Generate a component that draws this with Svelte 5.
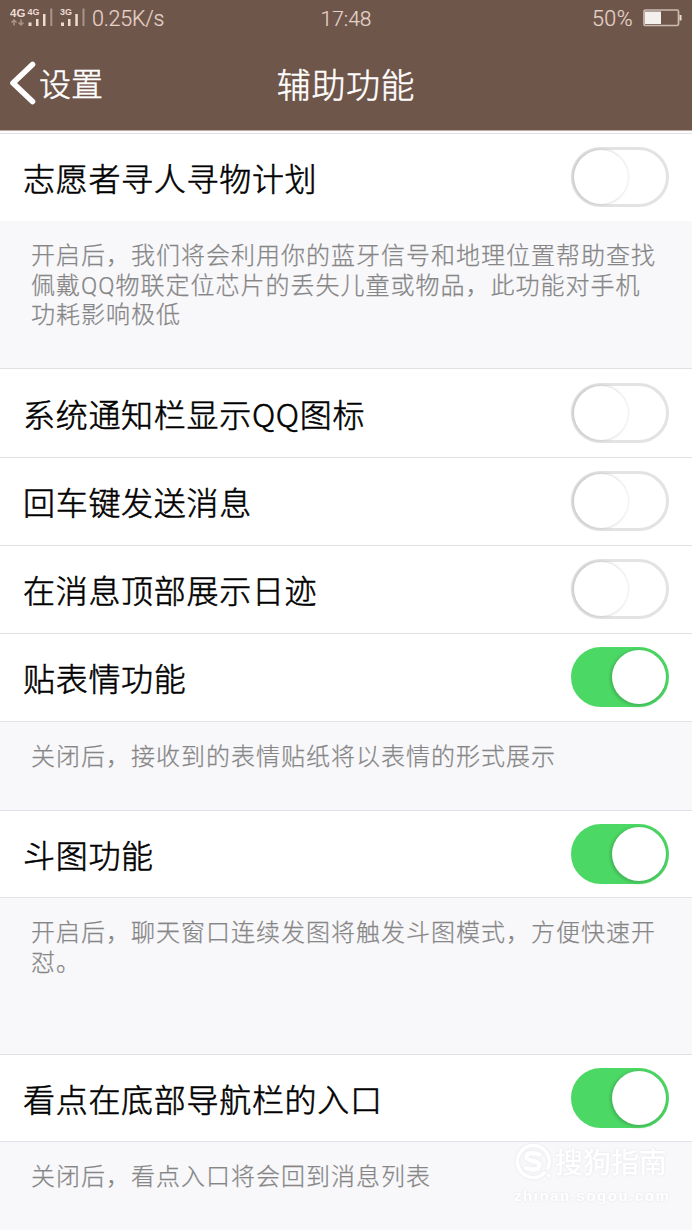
<script>
  const sections = [
    { rows: [{ label: '志愿者寻人寻物计划', on: false, h: 88 }], note: ['开启后，我们将会利用你的蓝牙信号和地理位置帮助查找', '佩戴QQ物联定位芯片的丢失儿童或物品，此功能对手机', '功耗影响极低'], h: 147 },
    { rows: [
      { label: '系统通知栏显示QQ图标', on: false, h: 89 },
      { label: '回车键发送消息', on: false, h: 88 },
      { label: '在消息顶部展示日迹', on: false, h: 88 },
      { label: '贴表情功能', on: true, h: 88 }
    ], note: ['关闭后，接收到的表情贴纸将以表情的形式展示'], h: 89 },
    { rows: [{ label: '斗图功能', on: true, h: 87 }], note: ['开启后，聊天窗口连续发图将触发斗图模式，方便快速开', '怼。'], h: 157 },
    { rows: [{ label: '看点在底部导航栏的入口', on: true, h: 87 }], note: ['关闭后，看点入口将会回到消息列表'], h: 89 }
  ];
</script>

<main class="screen">
  <header>
    <div class="status">
      <div class="left">
        <svg width="78" height="36" viewBox="9 0 78 36">
          <g fill="#ecdcd4" font-family="Liberation Sans, sans-serif" font-weight="700">
            <text x="10" y="17.200" font-size="11.5">4G</text>
            <text x="27.500" y="15" font-size="9">4G</text>
            <text x="60" y="15" font-size="9">3G</text>
          </g>
          <g fill="none" stroke="#aa9489" stroke-width="1.5">
            <path d="M14 25.500v-5.500M11.500 22.500L14 20l2.500 2.500M21 19.500V25M18.500 22.500L21 25l2.500-2.500" />
          </g>
          <path fill="#ecdcd4" d="M28.500 22.500h3v3.500h-3zM36 19h2.500v7h-2.500zM43 14h2.500v12h-2.500zM61 22.500h3v3.500h-3zM68 19h2.500v7h-2.500zM75.300 14h2.500v12h-2.500z" />
          <path fill="#aa9489" d="M50.300 8.500h2v17.500h-2zM82.500 8.500h2v17.500h-2z" />
        </svg>
        <span class="speed">0.25K/s</span>
      </div>
      <span class="clock">17:48</span>
      <div class="power">
        <span>50%</span>
        <svg width="40" height="18" viewBox="0 0 40 18">
          <rect x="2" y="1" width="34.500" height="15.500" rx="1.500" fill="none" stroke="#cbbbb2" stroke-width="1.700" />
          <path d="M3 2.500h16v12.500H3z" fill="#f4f0ee" />
          <path d="M37.500 6h2v5.500h-2z" fill="#ecdcd4" />
        </svg>
      </div>
    </div>
    <nav>
      <a class="back" href="#settings">
        <svg width="30" height="48" viewBox="0 0 30 48"><path d="M24.500 5.500L5 24l19.500 18.500" fill="none" stroke="#fff" stroke-width="5.600" stroke-linecap="round" stroke-linejoin="round" /></svg>
        <span>设置</span>
      </a>
      <h1>辅助功能</h1>
      <span></span>
    </nav>
  </header>
  <div class="gap"></div>
  {#each sections as s}
    <section>
      {#each s.rows as r}
        <div class="row" style:height="{r.h}px">
          <span class="label">{r.label}</span>
          <button class="toggle" class:on={r.on} role="switch" aria-checked={r.on} aria-label={r.label}><i></i></button>
        </div>
      {/each}
      <div class="note" style:height="{s.h}px">
        {#each s.note as line}<p>{line}</p>{/each}
      </div>
    </section>
  {/each}
  <div class="mark">
    <svg width="40" height="40" viewBox="0 0 40 40">
      <g fill="none" stroke="#fff" stroke-linecap="round">
        <path d="M30.500 31A16 16 0 1 1 34 26" stroke-width="3.500" />
        <path d="M25.500 12.500C19 10 12 11 12.500 15.500c.5 4 13 3 13 7.500 0 5-7 5.500-13.500 3" stroke-width="4.500" />
        <path d="M34 33l1 1" stroke-width="3" />
      </g>
    </svg>
    <span class="brand">搜狗指南</span>
    <span class="site">zhinan.sogou.com</span>
  </div>
</main>

<style>
  :global(body) { margin: 0; background: #f8f8fb; }
  .screen {
    position: relative;
    width: 692px;
    height: 1230px;
    overflow: hidden;
    background: #f8f8fb;
    font-family: "Noto Sans CJK SC", sans-serif;
    color: #080808;
  }
  header { height: 130px; background: #6f564a; color: #fff; border-bottom: 1px solid #b9aaa3; }
  .status {
    display: grid;
    grid-template-columns: 1fr auto 1fr;
    height: 36px;
    padding: 0 10px 0 9px;
    align-items: center;
    font-family: Roboto, sans-serif;
    font-size: 21.5px;
    font-weight: 300;
    color: #e4d3ca;
    -webkit-text-stroke: 0.2px #e4d3ca;
  }
  .left svg { -webkit-text-stroke: 0; }
  .left { display: flex; align-items: center; gap: 5px; }
  .speed { letter-spacing: -0.25px; }
  .clock { font-size: 21px; padding: 2px 0 0 1px; }
  .power { display: flex; justify-content: flex-end; align-items: center; gap: 9px; letter-spacing: 0.4px; }
  nav {
    display: grid;
    grid-template-columns: 1fr auto 1fr;
    align-items: center;
    height: 94px;
  }
  .back { display: flex; align-items: center; padding: 0 0 0 8px; color: #fff; text-decoration: none; font-size: 32px; line-height: 48px; font-weight: 300; -webkit-text-stroke: 0.5px #fff; }
  .back svg { margin-right: 1px; }
  .back span { margin-top: -3px; }
  h1 { margin: 1px 0 0; font-size: 34px; line-height: 50px; font-weight: 300; letter-spacing: 0.6px; -webkit-text-stroke: 0.5px #fff; }
  .gap { height: 2px; background: #fdfdfd; }
  .row {
    box-sizing: border-box;
    display: flex;
    align-items: center;
    justify-content: space-between;
    padding: 0 23px;
    background: #fff;
    border-top: 1px solid #e0e1e4;
  }
  .label { font-size: 32px; line-height: 48px; letter-spacing: 0.7px; margin-top: -1px; font-weight: 300; -webkit-text-stroke: 0.55px #000; color: #000; }
  .toggle {
    box-sizing: border-box;
    display: flex;
    align-items: center;
    width: 98px;
    height: 60px;
    margin: 0 0 1px;
    padding: 0;
    border: 3px solid #e3e3e3;
    border-radius: 30px;
    background: #fff;
  }
  .toggle i { width: 54px; height: 54px; border-radius: 50%; background: #fff; box-shadow: -1px 0 3px 0.5px #c6c6c6; }
  .toggle.on { justify-content: flex-end; border-color: #4cd864; background: #4cd864; }
  .toggle.on i { box-shadow: -1px 1px 3px 1px #42b557; }
  .note { box-sizing: border-box; padding: 20px 31px 0; border-top: 1px solid #e3e3e7; background: #f8f8fb; }
  section:first-of-type .note { border-top-color: #f8f8fb; }
  section:not(:first-of-type) .note { padding-top: 21px; }
  p { margin: 0; color: #868686; font-family: Roboto, "Noto Sans CJK SC", sans-serif; font-size: 24px; font-weight: 300; line-height: 29.5px; letter-spacing: 1px; white-space: nowrap; -webkit-text-stroke: 0.25px #868686; }
  .mark {
    position: absolute;
    left: 514px;
    top: 1142px;
    display: grid;
    grid-template-columns: 41px auto;
    color: #fff;
    filter: drop-shadow(0 0 1px #e2e2e6);
  }
  .brand { font-size: 28px; line-height: 40px; font-weight: 500; margin-top: -1px; }
  .site { grid-column: 1 / -1; font: 700 15px/24px "Liberation Sans", sans-serif; letter-spacing: 1.550px; margin-top: 2px; }
</style>
